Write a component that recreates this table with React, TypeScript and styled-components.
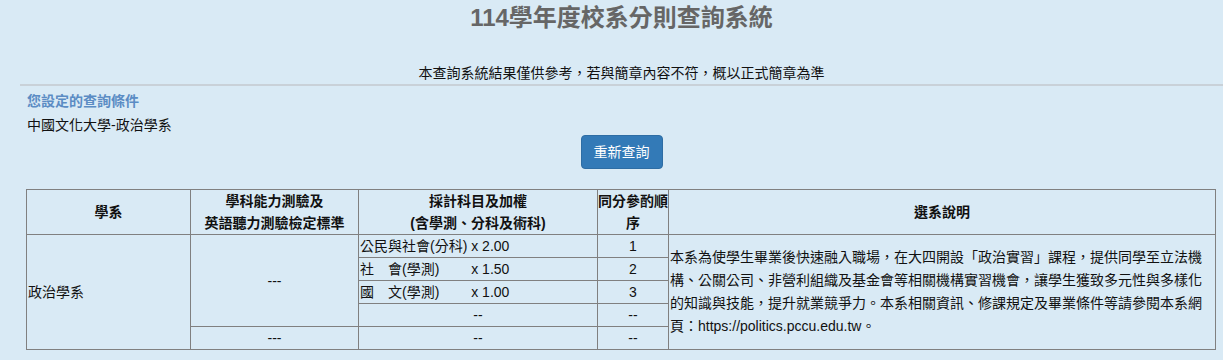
import styled, { createGlobalStyle } from "styled-components";

const GlobalStyle = createGlobalStyle`
  html, body {
    margin: 0;
    padding: 0;
    background-color: #d9eaf5;
    font-family: "Liberation Sans", "Noto Sans CJK TC", sans-serif;
    color: #111;
  }
`;

const Page = styled.div`
  padding-left: 20px;
  box-sizing: border-box;
`;

const Title = styled.h1`
  margin: 0;
  font-size: 24px;
  line-height: 36px;
  font-weight: 700;
  color: #666;
  text-align: center;
`;

const Notice = styled.div`
  margin-top: 27px;
  font-size: 14px;
  line-height: 20px;
  text-align: center;
`;

const Rule = styled.hr`
  margin: 1px 0 0;
  border: 0;
  border-top: 2px solid #c9d1d8;
`;

const Conditions = styled.div`
  padding: 5px 8px 0 7px;
`;

const Label = styled.div`
  font-size: 14px;
  line-height: 20px;
  font-weight: 700;
  color: #5b8cc4;
`;

const Value = styled.div`
  margin-top: 4px;
  font-size: 14px;
  line-height: 20px;
`;

const Actions = styled.div`
  display: flex;
  justify-content: center;
`;

const Button = styled.button`
  font-family: inherit;
  font-size: 14px;
  line-height: 20px;
  padding: 6px 12px;
  color: #fff;
  background-color: #337ab7;
  border: 1px solid #2e6da4;
  border-radius: 4px;
  cursor: pointer;
`;

const Table = styled.table`
  margin: 20px 8px 0 6px;
  width: 1189px;
  table-layout: fixed;
  border-collapse: collapse;
  font-size: 14px;
  line-height: 22px;
`;

const Col = styled.col<{ w: number }>`
  width: ${({ w }) => w}px;
`;

const Th = styled.th<{ nowrap?: boolean }>`
  border: 1px solid #808080;
  padding: 0;
  font-weight: 700;
  text-align: center;
  vertical-align: middle;
  white-space: ${({ nowrap }) => (nowrap ? "nowrap" : "normal")};
`;

const Td = styled.td<{ align?: "left" | "center" }>`
  border: 1px solid #808080;
  padding: 0 1px;
  text-align: ${({ align }) => align ?? "center"};
  vertical-align: middle;
  white-space: pre-wrap;
`;

const Description = styled(Td)`
  white-space: normal;
  line-height: 23px;
`;

const subjects = [
  { name: "公民與社會(分科) x 2.00", order: "1" },
  { name: "社　會(學測)　　 x 1.50", order: "2" },
  { name: "國　文(學測)　　 x 1.00", order: "3" },
];

export default function App() {
  return (
    <Page>
      <GlobalStyle />
      <Title>114學年度校系分則查詢系統</Title>
      <Notice>本查詢系統結果僅供參考，若與簡章內容不符，概以正式簡章為準</Notice>
      <Rule />
      <Conditions>
        <Label>您設定的查詢條件</Label>
        <Value>中國文化大學-政治學系</Value>
      </Conditions>
      <Actions>
        <Button>重新查詢</Button>
      </Actions>
      <Table>
        <colgroup>
          <Col w={164} />
          <Col w={168} />
          <Col w={239} />
          <Col w={71} />
          <Col w={547} />
        </colgroup>
        <thead>
          <tr>
            <Th>學系</Th>
            <Th>
              學科能力測驗及
              <br />
              英語聽力測驗檢定標準
            </Th>
            <Th>
              採計科目及加權
              <br />
              (含學測、分科及術科)
            </Th>
            <Th nowrap>
              同分參酌順
              <br />
              序
            </Th>
            <Th>選系說明</Th>
          </tr>
        </thead>
        <tbody>
          {subjects.map((s, i) => (
            <tr key={s.order}>
              {i === 0 && (
                <>
                  <Td align="left" rowSpan={5}>
                    政治學系
                  </Td>
                  <Td rowSpan={4}>---</Td>
                </>
              )}
              <Td align="left">{s.name}</Td>
              <Td>{s.order}</Td>
              {i === 0 && (
                <Description align="left" rowSpan={5}>
                  本系為使學生畢業後快速融入職場，在大四開設「政治實習」課程，提供同學至立法機構、公關公司、非營利組織及基金會等相關機構實習機會，讓學生獲致多元性與多樣化的知識與技能，提升就業競爭力。本系相關資訊、修課規定及畢業條件等請參閱本系網頁：https://politics.pccu.edu.tw。
                </Description>
              )}
            </tr>
          ))}
          <tr>
            <Td>--</Td>
            <Td>--</Td>
          </tr>
          <tr>
            <Td>---</Td>
            <Td>--</Td>
            <Td>--</Td>
          </tr>
        </tbody>
      </Table>
    </Page>
  );
}
